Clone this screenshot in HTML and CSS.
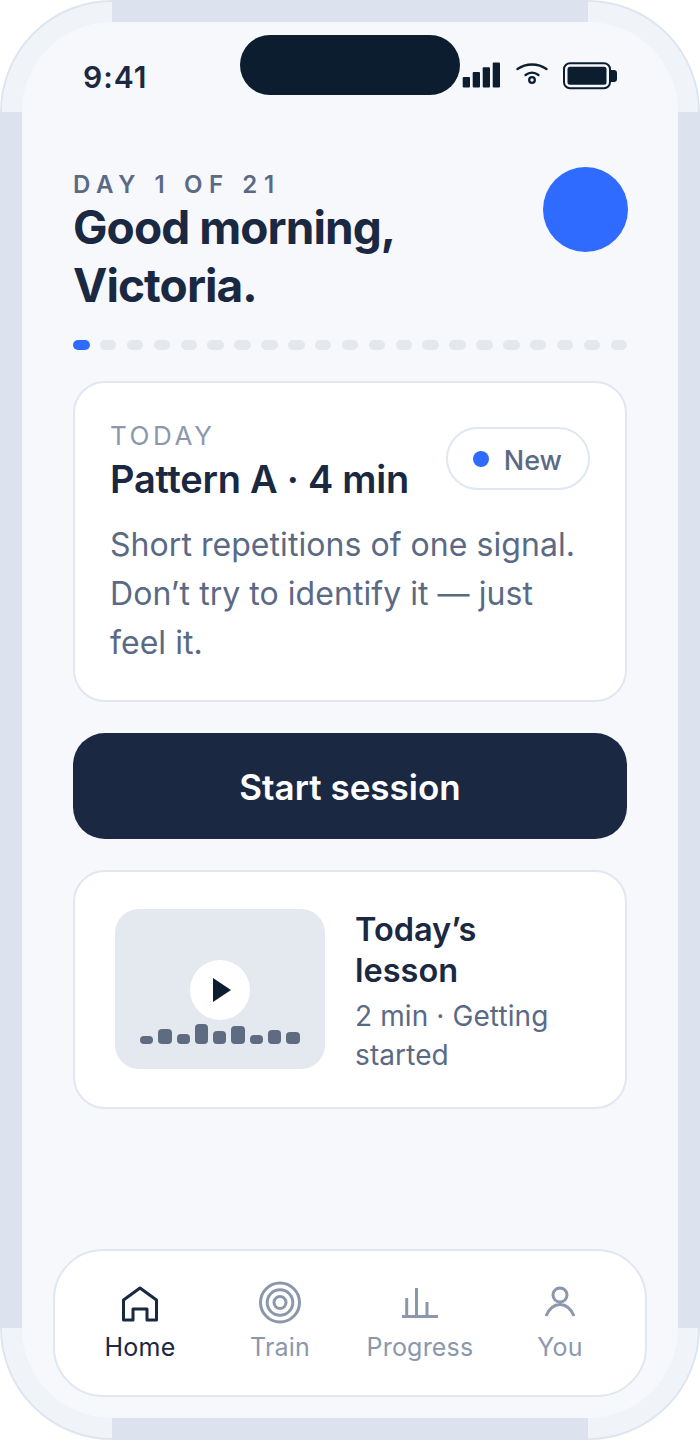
FILE: index.html
```html
<!DOCTYPE html>
<html lang="en">
<head>
<meta charset="utf-8">
<title>Home</title>
<link rel="stylesheet" href="styles.css">
</head>
<body>
<div class="shell">
  <main class="screen">
    <header class="status">
      <span class="time">9:41</span>
      <div class="island"></div>
      <div class="status-icons">
        <svg class="signal" width="38" height="26" viewBox="0 0 38 26"><rect x="0.7" y="15" width="7.3" height="10.6" rx="1"/><rect x="10.7" y="10" width="7.3" height="15.6" rx="1"/><rect x="20.7" y="5.3" width="7.3" height="20.3" rx="1"/><rect x="30.7" y="0.6" width="7.3" height="25" rx="1"/></svg>
        <svg class="wifi" width="32" height="26" viewBox="0 0 32 26"><path d="M1.5 7 C10 1 22 1 30.5 7"/><path d="M9.5 13 C13.5 10 18.5 10 22.5 13"/><circle cx="16" cy="18" r="2.8"/></svg>
        <svg class="battery" width="55" height="28" viewBox="0 0 55 28"><rect x="1" y="1.2" width="46" height="25" rx="6" class="bat-case"/><rect x="4.5" y="4.7" width="39" height="18" rx="2.5" class="bat-fill"/><path d="M48 8 h3 a3 3 0 0 1 3 3 v6 a3 3 0 0 1 -3 3 h-3 z" class="bat-fill"/></svg>
      </div>
    </header>

    <section class="greeting">
      <div class="greeting-text">
        <p class="eyebrow">DAY 1 OF 21</p>
        <h1 class="title">Good morning,<br>Victoria.</h1>
      </div>
      <div class="avatar"></div>
    </section>

    <div class="dots">
      <span class="dot dot-on"></span><span class="dot"></span><span class="dot"></span><span class="dot"></span><span class="dot"></span><span class="dot"></span><span class="dot"></span><span class="dot"></span><span class="dot"></span><span class="dot"></span><span class="dot"></span><span class="dot"></span><span class="dot"></span><span class="dot"></span><span class="dot"></span><span class="dot"></span><span class="dot"></span><span class="dot"></span><span class="dot"></span><span class="dot"></span><span class="dot"></span>
    </div>

    <section class="card today">
      <div class="today-head">
        <div>
          <p class="today-label">TODAY</p>
          <h2 class="today-title">Pattern A · 4 min</h2>
        </div>
        <span class="pill"><span class="pill-dot"></span><span class="pill-text">New</span></span>
      </div>
      <p class="today-body">Short repetitions of one signal. Don’t try to identify it — just feel it.</p>
    </section>

    <button class="start" type="button">Start session</button>

    <section class="card lesson">
      <div class="thumb">
        <span class="play"><svg width="20" height="26" viewBox="0 0 20 26"><path d="M1 1 L19 13 L1 25 Z"/></svg></span>
        <div class="bars">
          <span class="bar b8"></span><span class="bar b15"></span><span class="bar b10"></span><span class="bar b20"></span><span class="bar b13"></span><span class="bar b18"></span><span class="bar b9"></span><span class="bar b14"></span><span class="bar b12"></span>
        </div>
      </div>
      <div class="lesson-text">
        <h3 class="lesson-title">Today’s lesson</h3>
        <p class="lesson-sub">2 min · Getting started</p>
      </div>
    </section>

    <nav class="nav">
      <a class="tab tab-on">
        <svg width="40" height="40" viewBox="0 0 40 40"><path d="M3.5 37 V17 L20 5 L36.5 17 V37 H27 V26 H13 V37 Z"/></svg>
        <span>Home</span>
      </a>
      <a class="tab">
        <svg width="42" height="40" viewBox="0 0 42 40"><circle cx="21" cy="19.5" r="19.5"/><circle cx="21" cy="19.5" r="12.8"/><circle cx="21" cy="19.5" r="6"/></svg>
        <span>Train</span>
      </a>
      <a class="tab">
        <svg width="40" height="40" viewBox="0 0 40 40"><path d="M2 33.5 H38 M6.7 33 V15 M16.5 33 V5 M27 33 V19"/></svg>
        <span>Progress</span>
      </a>
      <a class="tab">
        <svg width="40" height="40" viewBox="0 0 40 40"><circle cx="20" cy="12" r="7"/><path d="M6 33 C9 26 14 21.5 20 21.5 S31 26 34 33"/></svg>
        <span>You</span>
      </a>
    </nav>
  </main>
</div>
</body>
</html>
```

FILE: styles.css
```css
* { box-sizing: border-box; margin: 0; padding: 0; }
html, body { background: #ffffff; }
body { width: 700px; height: 1440px; overflow: hidden; font-family: Inter, "Liberation Sans", sans-serif; }

.shell {
  position: relative;
  width: 700px;
  height: 1440px;
  padding: 20px;
  border: 2px solid #dde6f0;
  border-radius: 112px;
  background: #f0f4f9;
  background-clip: padding-box;
}
.shell::before, .shell::after {
  content: "";
  position: absolute;
  background-repeat: no-repeat;
}
.shell::before {
  left: 110px; right: 110px; top: -2px; bottom: -2px;
  background-image: linear-gradient(#dce2ee, #dce2ee), linear-gradient(#dce2ee, #dce2ee);
  background-size: 100% 22px;
  background-position: top, bottom;
}
.shell::after {
  left: -2px; right: -2px; top: 110px; bottom: 110px;
  background-image: linear-gradient(#dce2ee, #dce2ee), linear-gradient(#dce2ee, #dce2ee);
  background-size: 22px 100%;
  background-position: left, right;
}

.screen {
  position: relative;
  z-index: 1;
  display: flex;
  flex-direction: column;
  height: 100%;
  padding: 13px 51px 21px;
  border-radius: 90px;
  background: #f6f8fc;
}

.status { display: flex; align-items: center; height: 60px; margin: 0 0 72px; }
.time { flex: 0 0 167px; padding-left: 10px; padding-top: 24px; font-size: 30px; font-weight: 600; color: #1a2842; line-height: 34px; letter-spacing: 1px; }
.island { flex: 0 0 220px; height: 60px; border-radius: 30px; background: #0d1d30; }
.status-icons { display: flex; align-items: flex-start; gap: 16px; margin: 22px 0 0 2px; height: 28px; }
.battery { margin-left: -1px; }
.signal { fill: #0d1d30; }
.wifi { fill: none; stroke: #0d1d30; stroke-width: 2.3; stroke-linecap: round; }
.battery .bat-case { fill: none; stroke: #0d1d30; stroke-width: 2; }
.battery .bat-fill { fill: #0d1d30; }

.greeting { display: flex; justify-content: space-between; align-items: flex-start; }
.eyebrow { font-size: 24px; font-weight: 600; line-height: 36px; letter-spacing: 6.6px; color: #5b6a84; }
.title { margin-top: -5px; font-size: 46px; font-weight: 700; line-height: 58px; letter-spacing: -0.92px; color: #1a2842; }
.avatar { flex: none; width: 85px; height: 85px; margin-right: -1px; border-radius: 50%; background: #2f6bff; }

.dots { display: flex; gap: 10.3px; margin-top: 26px; }
.dot { flex: 1; height: 10px; border-radius: 5px; background: #e4e7ec; }
.dot-on { background: #2f6bff; }

.card { border: 2px solid #e0e7f1; background: #ffffff; border-radius: 32px; }

.today { margin-top: 31px; height: 321px; padding: 37px 35px 0 36px; }
.today-head { display: flex; justify-content: space-between; align-items: flex-start; }
.today-label { margin-left: -1px; font-size: 26px; line-height: 32px; letter-spacing: 3.6px; color: #8b98ac; }
.today-title { margin-top: 5px; margin-left: -1px; font-size: 38px; line-height: 44px; font-weight: 600; letter-spacing: -0.25px; color: #1a2842; }
.pill { display: flex; align-items: center; gap: 15px; height: 63px; margin: 7px 0 0 0; padding: 0 26px 0 25px; border: 2px solid #e0e7f1; border-radius: 32px; font-size: 27px; font-weight: 500; color: #5b6a84; }
.pill-dot { width: 16px; height: 16px; border-radius: 50%; background: #2f6bff; }
.pill-text { padding-top: 3px; }
.today-body { margin: 19px -1px 0 -1px; font-size: 32px; line-height: 49px; letter-spacing: .05px; color: #5b6a84; }

.start { display: block; height: 106px; margin-top: 31px; padding-top: 2px; border: 0; border-radius: 32px; background: #1a2842; color: #ffffff; font: 600 35px Inter, "Liberation Sans", sans-serif; }

.lesson { display: flex; gap: 30px; height: 239px; margin-top: 31px; padding: 37px 40px 0; }
.thumb { position: relative; flex: none; display: flex; align-items: center; justify-content: center; width: 210px; height: 160px; border-radius: 24px; background: #e4e8ef; }
.play { display: flex; align-items: center; justify-content: center; width: 60px; height: 60px; padding-left: 4px; margin-top: 2px; border-radius: 50%; background: #ffffff; }
.play svg { fill: #0d1d30; }
.bars { position: absolute; left: 25px; bottom: 25px; display: flex; align-items: flex-end; gap: 5px; }
.bar { width: 13.3px; border-radius: 4px; background: #5f6b80; }
.b8 { height: 8px; } .b9 { height: 9px; } .b10 { height: 10px; } .b12 { height: 12px; } .b13 { height: 13px; } .b14 { height: 14px; } .b15 { height: 15px; } .b18 { height: 18px; } .b20 { height: 20px; }
.lesson-title { font-size: 32.5px; line-height: 41px; font-weight: 600; color: #1a2842; }
.lesson-sub { margin-top: 6px; font-size: 28px; line-height: 39px; letter-spacing: .1px; color: #5b6a84; }

.nav { display: grid; grid-template-columns: repeat(4, 140px); justify-content: center; height: 148px; margin: auto -20px 0; padding-top: 32px; border: 2px solid #e0e7f1; border-radius: 50px; background: #ffffff; }
.tab { display: flex; flex-direction: column; align-items: center; gap: 6px; font-size: 25px; line-height: 36px; letter-spacing: .2px; color: #8b98ac; }
.tab svg { fill: none; stroke: #8b98ac; stroke-width: 3; stroke-linejoin: round; overflow: visible; }
.tab-on { color: #1a2842; }
.tab-on svg { stroke: #1a2842; }
```
